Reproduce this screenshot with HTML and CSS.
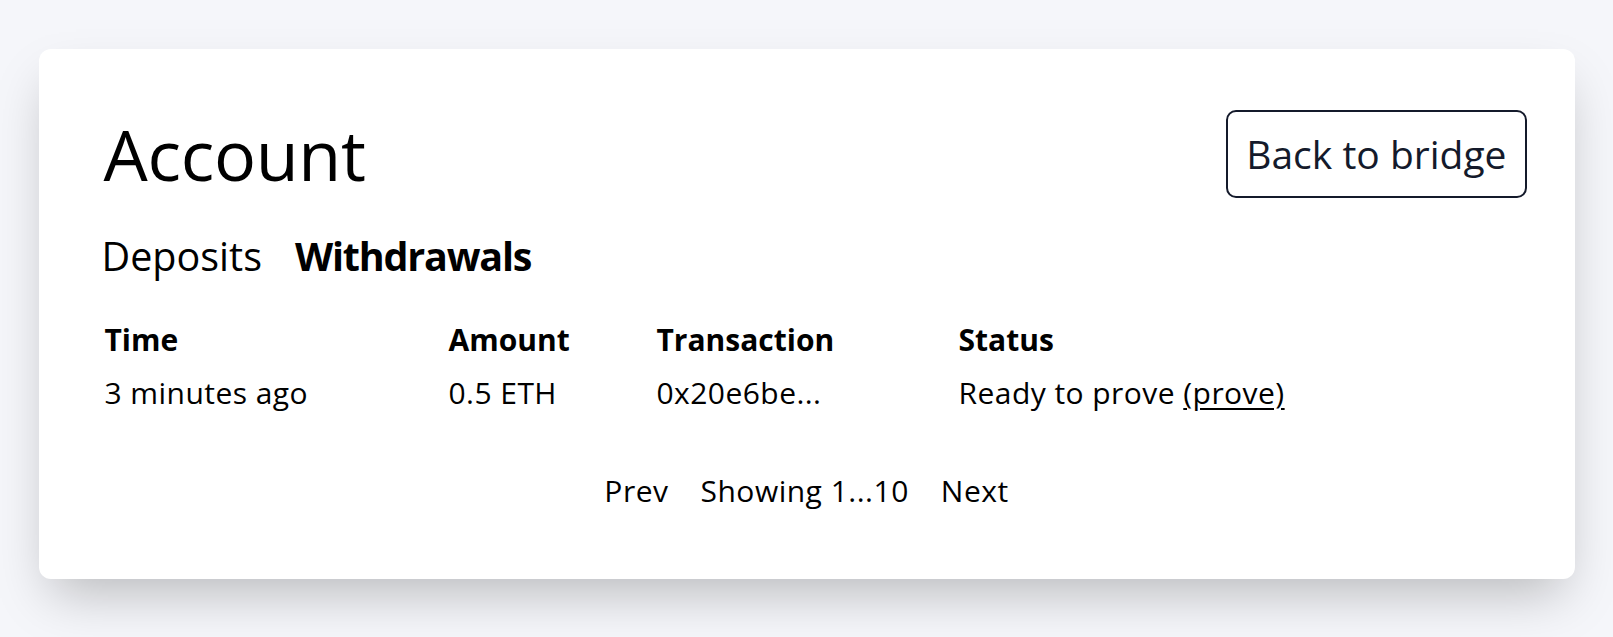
FILE: index.html
```html
<!DOCTYPE html>
<html lang="en">
<head>
<meta charset="utf-8">
<title>Account</title>
<link rel="stylesheet" href="styles.css">
</head>
<body>
  <main class="card">
    <header class="card-header">
      <h1 class="title">Account</h1>
      <button class="back-btn" type="button">Back to bridge</button>
    </header>
    <nav class="tabs">
      <span class="tab">Deposits</span>
      <span class="tab tab-active">Withdrawals</span>
    </nav>
    <div class="table">
      <div class="cell head">Time</div>
      <div class="cell head">Amount</div>
      <div class="cell head">Transaction</div>
      <div class="cell head">Status</div>
      <div class="cell">3 minutes ago</div>
      <div class="cell">0.5 ETH</div>
      <div class="cell">0x20e6be...</div>
      <div class="cell">Ready to prove <a class="link" href="#">(prove)</a></div>
    </div>
    <div class="pager">
      <span class="pager-item">Prev</span>
      <span class="pager-item">Showing 1...10</span>
      <span class="pager-item">Next</span>
    </div>
  </main>
</body>
</html>
```

FILE: styles.css
```css
html, body {
  margin: 0;
  padding: 0;
}

body {
  background: #f5f6fa;
  font-family: "Open Sans", "Noto Sans", sans-serif;
  color: #000;
  padding-top: 49px;
  min-height: 100vh;
  box-sizing: border-box;
}

.card {
  display: block;
  max-width: 1536px;
  margin: 0 auto;
  background: #fff;
  border-radius: 12px;
  padding: 61px 65px 70px 65px;
  box-sizing: border-box;
  box-shadow: 0 25px 50px -12px rgba(0, 0, 0, 0.25);
}

.card-header {
  display: flex;
  align-items: center;
  justify-content: space-between;
  margin-right: -17px;
}

.title {
  margin: 0;
  font-size: 70px;
  font-weight: 400;
  line-height: 1;
  letter-spacing: -0.3px;
}

.back-btn {
  font-family: inherit;
  font-size: 39px;
  line-height: 44px;
  color: #141a2b;
  background: #fff;
  border: 2px solid #141a2b;
  border-radius: 10px;
  padding: 20px 18px;
  margin: 0;
  cursor: pointer;
}

.tabs {
  display: flex;
  gap: 33px;
  margin-top: 35px;
  margin-left: -2px;
  font-size: 39.5px;
  line-height: 46px;
}

.tab-active {
  font-weight: 700;
  letter-spacing: -1.2px;
}

.table {
  display: grid;
  grid-template-columns: 344px 208px 302px 1fr;
  margin-top: 34px;
  font-size: 30px;
  line-height: 37px;
}

.cell {
  padding: 8px 0 8px 1px;
  letter-spacing: 0.45px;
}

.head {
  font-weight: 700;
  letter-spacing: 0;
}

.link {
  color: inherit;
  text-decoration: underline;
  text-underline-offset: 4px;
  text-decoration-thickness: 2px;
}

.pager {
  display: flex;
  justify-content: center;
  gap: 32px;
  margin-top: 54px;
  font-size: 30px;
  line-height: 36px;
  letter-spacing: 0.5px;
}
```
